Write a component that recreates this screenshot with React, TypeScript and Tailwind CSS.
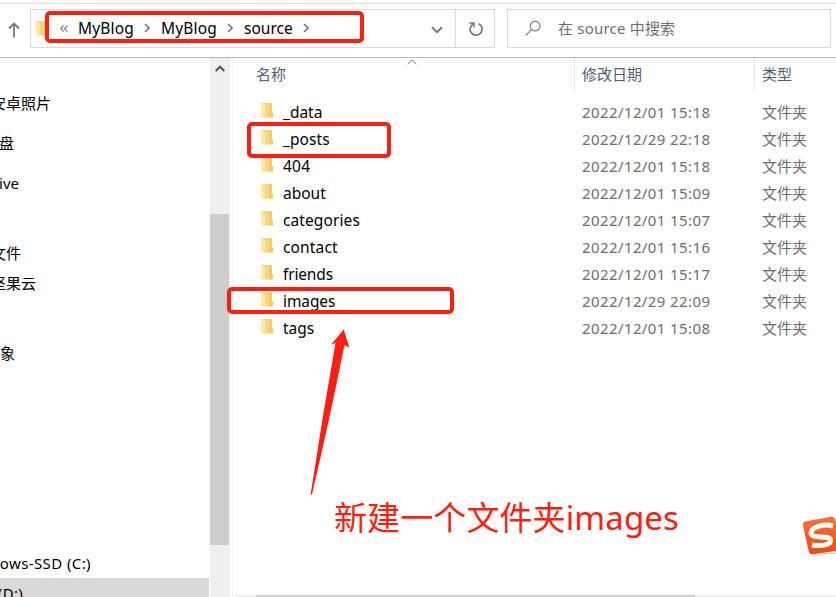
import React from "react";

const FONT = "font-['Noto_Sans','Noto_Sans_CJK_SC',sans-serif]";

const files = [
  { name: "_data", date: "2022/12/01 15:18", track: "tracking-[0px]" },
  { name: "_posts", date: "2022/12/29 22:18", track: "tracking-[0.1px]" },
  { name: "404", date: "2022/12/01 15:18", track: "tracking-[0.2px]" },
  { name: "about", date: "2022/12/01 15:09", track: "tracking-[0px]" },
  { name: "categories", date: "2022/12/01 15:07", track: "tracking-[0.1px]" },
  { name: "contact", date: "2022/12/01 15:16", track: "tracking-[0.15px]" },
  { name: "friends", date: "2022/12/01 15:17", track: "tracking-[-0.15px]" },
  { name: "images", date: "2022/12/29 22:09", track: "tracking-[-0.1px]" },
  { name: "tags", date: "2022/12/01 15:08", track: "tracking-[0px]" },
];

const places = [
  { label: "安卓照片", row: "mt-[30px] w-[51px]" },
  { label: "盘", row: "mt-[10px] w-[14px]" },
  { label: "ive", row: "mt-[10px] w-[19px]" },
  { label: "文件", row: "mt-[40px] w-[21px]" },
  { label: "坚果云", row: "mt-0 w-[36px]" },
  { label: "象", row: "mt-[40px] w-[15px]" },
  { label: "ows-SSD (C:)", row: "mt-[180px] w-[91px] tracking-[0.4px]" },
];

function Folder({ className = "" }: { className?: string }) {
  return (
    <svg className={`shrink-0 ${className}`} width="13" height="18" viewBox="0 0 13 18">
      <path d="M1 1H11V10L12 11V15.6H3Z" fill="#f6d67e" />
      <path d="M8 1H11V10L12 11V15.6H8Z" fill="#f0cc6c" />
      <path d="M0 0.8L4 3V17L3 16.8L0 14.5Z" fill="#ffe9a6" />
    </svg>
  );
}

function Crumb({ className = "" }: { className?: string }) {
  return (
    <svg className={`-mt-[2px] shrink-0 ${className}`} width="6" height="10" viewBox="0 0 6 10">
      <path d="M1 1L5 5L1 9" fill="none" stroke="#777" strokeWidth="1.6" />
    </svg>
  );
}

function Toolbar() {
  return (
    <header className="mt-[3px] flex h-[55px] shrink-0 items-start border-b border-t border-b-[#b9b9b9] border-t-[#d9d9d9] pt-[5px]">
      <div className="flex h-[39px] w-[30px] items-center pl-2">
        <svg width="12" height="16" viewBox="0 0 12 16" className="mt-[3px]">
          <path d="M6 15.5V1.5M1 6.5L6 1.5L11 6.5" fill="none" stroke="#777" strokeWidth="1.8" />
        </svg>
      </div>
      <div className="flex h-[39px] w-[465px] border border-[#d9d9d9]">
        <div className="flex w-[424px] items-center pl-[5px] text-[15.5px] leading-5 text-black">
          <Folder />
          <svg width="8" height="7" viewBox="0 0 8 7" className="ml-[11px]">
            <path d="M3.6 .5L.8 3.5L3.6 6.5M7.4 .5L4.6 3.5L7.4 6.5" fill="none" stroke="#777" strokeWidth="1.1" />
          </svg>
          <span className="-mt-[2px] ml-[10px] w-[66px] whitespace-nowrap tracking-[0.15px]">MyBlog</span>
          <Crumb />
          <span className="-mt-[2px] ml-[11px] w-[66px] whitespace-nowrap tracking-[0.15px]">MyBlog</span>
          <Crumb />
          <span className="-mt-[2px] ml-[11px] w-[59px] whitespace-nowrap">source</span>
          <Crumb />
          <svg width="12" height="8" viewBox="0 0 12 8" className="ml-auto mr-3 mt-[3px]">
            <path d="M1 1.2L6 6.2L11 1.2" fill="none" stroke="#777" strokeWidth="2" />
          </svg>
        </div>
        <div className="flex flex-1 items-center border-l border-[#d9d9d9] pl-[12px]">
          <svg width="16" height="16" viewBox="0 0 16 16">
            <path d="M5.1 3A6 6 0 1 0 10.5 2.7" fill="none" stroke="#777" strokeWidth="1.8" />
            <path d="M1.5 2H6V6.5" fill="none" stroke="#777" strokeWidth="1.5" />
          </svg>
        </div>
      </div>
      <div className="ml-3 flex h-[39px] w-[324px] items-center border border-[#d9d9d9] pl-[17px] text-[15px] leading-5 text-[#6d6d6d]">
        <svg width="17" height="17" viewBox="0 0 17 17">
          <circle cx="10.2" cy="6" r="4.9" fill="none" stroke="#777" strokeWidth="1.1" />
          <path d="M6.5 9.6L.8 15.3" stroke="#777" strokeWidth="1.2" />
        </svg>
        <span className="-mt-[2px] ml-[16px] whitespace-nowrap tracking-[0.2px]">在 source 中搜索</span>
      </div>
    </header>
  );
}

function Sidebar() {
  return (
    <nav className="flex w-[210px] shrink-0 flex-col overflow-hidden text-[15px] leading-[30px] text-black">
      {places.map((p) => (
        <div key={p.label} className={`flex h-[30px] shrink-0 justify-end whitespace-nowrap ${p.row}`}>
          <span>{p.label}</span>
        </div>
      ))}
      <div className="h-[30px] w-[209px] shrink-0 bg-[#d9d9d9]">
        <div className="flex w-[23px] justify-end whitespace-nowrap tracking-[0.3px]">(D:)</div>
      </div>
    </nav>
  );
}

function FileList() {
  return (
    <main className="flex min-w-0 flex-1 flex-col border-l border-[#f3f3f3]">
      <div className="flex h-8 text-[15px] leading-8 text-[#4c607a]">
        <div className="relative w-[341px] pl-[23px]">
          名称
          <svg width="10" height="6" viewBox="0 0 10 6" className="absolute left-[173.5px] top-[1px]">
            <path d="M.5 5.3L5 .8L9.5 5.3" fill="none" stroke="#777" strokeWidth="1" />
          </svg>
        </div>
        <div className="w-[180px] border-l border-[#e2e2e2] pl-[7px]">修改日期</div>
        <div className="flex-1 border-l border-[#e2e2e2] pl-[7px]">类型</div>
      </div>
      <div className="mt-[9px] flex flex-col">
        {files.map((f) => (
          <div key={f.name} className="flex h-[27px] leading-[27px]">
            <div className="flex w-[349px] pl-[28px]">
              <Folder className="mt-[3px]" />
              <span className={`ml-[9px] text-[15.5px] text-black ${f.track}`}>{f.name}</span>
            </div>
            <div className="w-[180px] whitespace-nowrap text-[15px] tracking-[0.4px] text-[#6d6d6d]">{f.date}</div>
            <div className="text-[15px] text-[#6d6d6d]">文件夹</div>
          </div>
        ))}
      </div>
      <div className="ml-[2px] mt-auto h-[2px] bg-[#efefef] pl-[21px]">
        <div className="h-full w-[439px] bg-[#cdcdcd]" />
      </div>
    </main>
  );
}

export default function App() {
  return (
    <div className={`relative flex h-[597px] w-[836px] flex-col overflow-hidden bg-white ${FONT}`}>
      <Toolbar />
      <div className="flex min-h-0 flex-1">
        <Sidebar />
        <div className="mr-[2px] flex w-5 shrink-0 flex-col bg-[#efefef]">
          <svg width="10" height="7" viewBox="0 0 10 7" className="ml-[4.5px] mt-[7px]">
            <path d="M.7 6L5 1.7L9.3 6" fill="none" stroke="#555" strokeWidth="2" />
          </svg>
          <div className="mt-[142px] h-[331px] w-[19px] bg-[#cdcdcd]" />
        </div>
        <FileList />
      </div>

      {/* Annotations over the window */}
      <div className="absolute left-[45px] top-[11px] h-[32px] w-[319px] rounded-[5px] border-4 border-[#ff1e10]" />
      <div className="absolute left-[247px] top-[122px] h-[36px] w-[144px] rounded-[5px] border-4 border-[#ff1e10]" />
      <div className="absolute left-[227px] top-[287px] h-[27px] w-[227px] rounded-[5px] border-4 border-[#ff1e10]" />
      <svg className="absolute left-[305px] top-[325px]" width="50" height="175" viewBox="0 0 50 175">
        <path d="M38.7 4.5L44.4 22.4L39.5 20Q24 97 7 169.5H5.6Q17 94 30.5 18L26.2 19.5Z" fill="#ff1e10" />
      </svg>
      <div className="absolute left-[334px] top-[498px] whitespace-nowrap text-[33px] leading-10 tracking-[0.1px] text-[#ff1e10]">
        新建一个文件夹images
      </div>
      <svg className="absolute left-[800px] top-[512px]" width="36" height="46" viewBox="0 0 36 46">
        <defs>
          <linearGradient id="badge" x1="0" y1="0" x2="0" y2="1">
            <stop offset="0" stopColor="#f9703c" />
            <stop offset="1" stopColor="#f04a10" />
          </linearGradient>
        </defs>
        <path d="M22 41.5H36" stroke="#c9cfe4" strokeWidth="1" />
        <path d="M5 9.5L31 4.8Q34 4.3 35 7L44 38L13 42.3Q9.5 42.6 8.8 39.5L3 13.5Q2.5 10.3 5 9.5Z" fill="url(#badge)" />
        <path d="M33 14C24 11.5 12 14.5 11 21C10.5 27.5 30 22.5 30.5 28C31 33 22 34.5 12 33" fill="none" stroke="#fff" strokeWidth="5" />
      </svg>
    </div>
  );
}
